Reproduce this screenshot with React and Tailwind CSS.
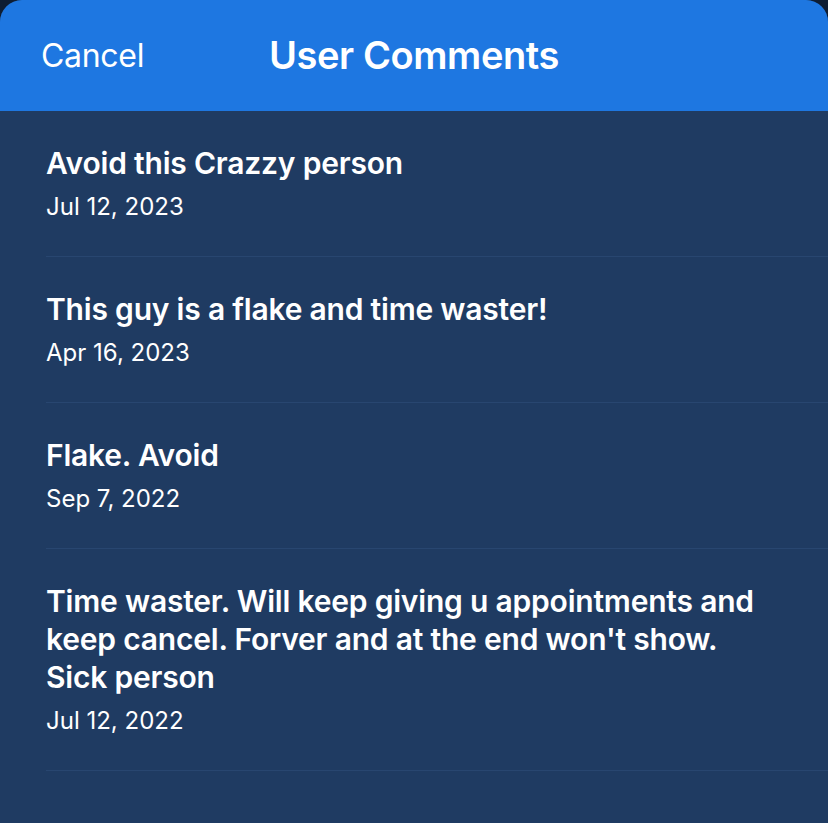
import React from 'react'

const comments = [
  { id: 1, text: 'Avoid this Crazzy person', date: 'Jul 12, 2023' },
  { id: 2, text: 'This guy is a flake and time waster!', date: 'Apr 16, 2023' },
  { id: 3, text: 'Flake. Avoid', date: 'Sep 7, 2022' },
  {
    id: 4,
    text: "Time waster. Will keep giving u appointments and keep cancel. Forver and at the end won't show. Sick person",
    date: 'Jul 12, 2022',
  },
]

export default function App() {
  return (
    <div
      className="w-[828px] h-[823px] bg-[#0e1d33] overflow-hidden"
      style={{ fontFamily: 'Inter, "Noto Sans", sans-serif' }}
    >
      <div className="h-full bg-[#1f3b62] rounded-t-[22px] overflow-hidden flex flex-col">
        {/* Header */}
        <div className="relative h-[111px] shrink-0 bg-[#1e77e1] flex items-center">
          <button className="pl-[41px] text-[32px] text-white font-normal tracking-[-0.3px]">
            Cancel
          </button>
          <h1 className="absolute left-0 right-0 text-center text-[38px] font-semibold text-white tracking-[-0.4px] pointer-events-none">
            User Comments
          </h1>
        </div>

        {/* List */}
        <ul className="pl-[46px]">
          {comments.map((c) => (
            <li
              key={c.id}
              className="pt-[33px] pb-[34px] pr-[50px] border-b border-[#284670]"
            >
              <p className="text-[30px] leading-[38px] font-semibold text-white tracking-[-0.2px]">
                {c.text}
              </p>
              <p className="mt-[10px] text-[24px] leading-[30px] text-white">
                {c.date}
              </p>
            </li>
          ))}
        </ul>
      </div>
    </div>
  )
}
